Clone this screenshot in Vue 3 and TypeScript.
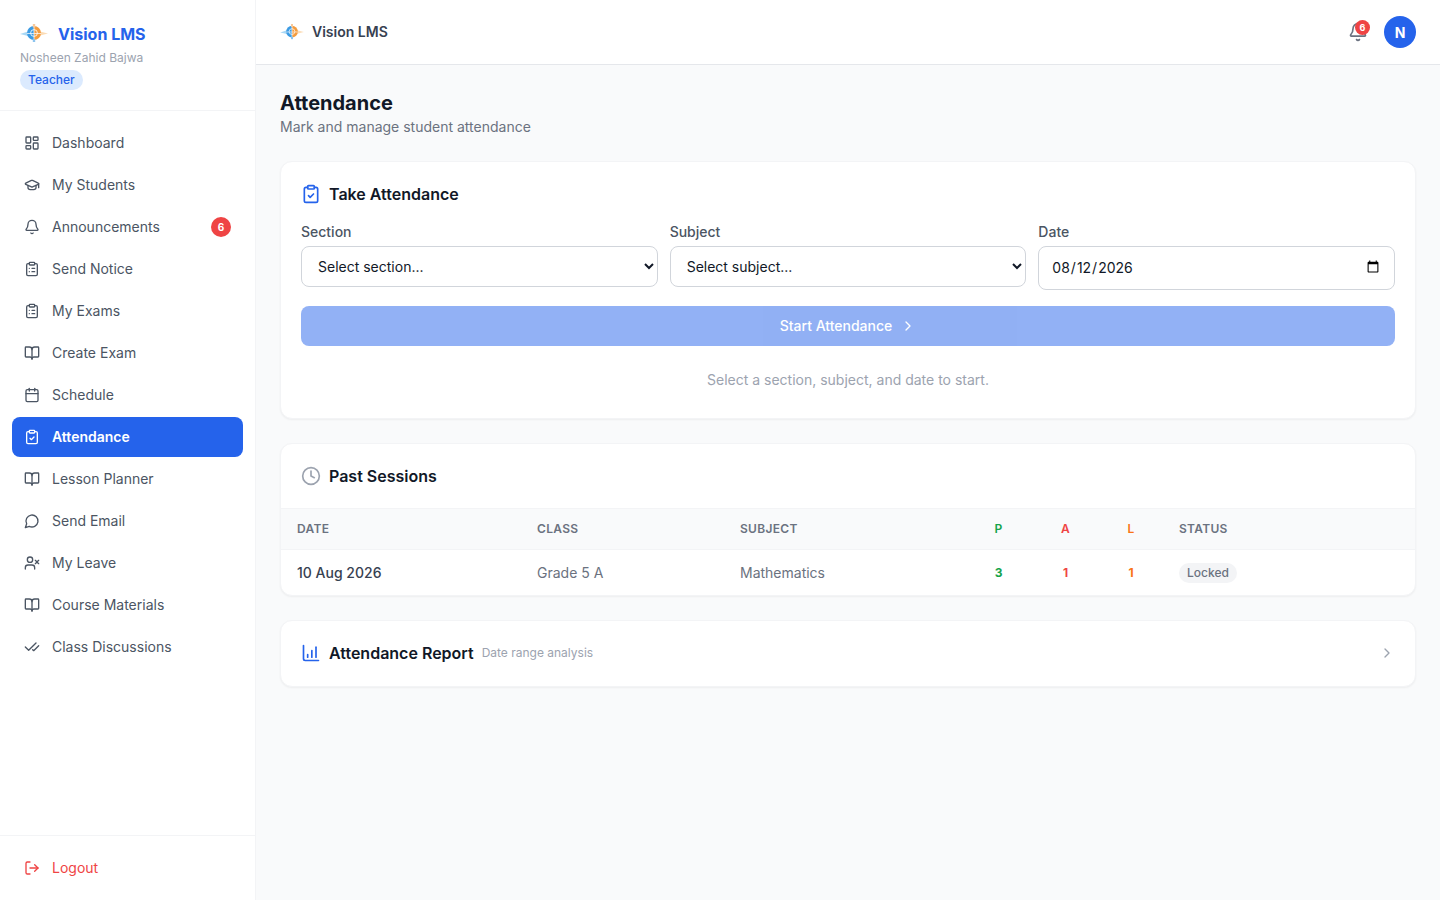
<script setup lang="ts">
const navItems = [
  { label: 'Dashboard', icon: 'grid' },
  { label: 'My Students', icon: 'cap' },
  { label: 'Announcements', icon: 'bell', badge: 6 },
  { label: 'Send Notice', icon: 'list' },
  { label: 'My Exams', icon: 'list' },
  { label: 'Create Exam', icon: 'book' },
  { label: 'Schedule', icon: 'calendar' },
  { label: 'Attendance', icon: 'check', active: true },
  { label: 'Lesson Planner', icon: 'book' },
  { label: 'Send Email', icon: 'chat' },
  { label: 'My Leave', icon: 'userx' },
  { label: 'Course Materials', icon: 'book' },
  { label: 'Class Discussions', icon: 'checks' },
]
</script>

<template>
  <div class="layout">
    <aside class="sidebar">
      <div class="brand">
        <div class="brand-row">
          <svg class="logo" width="28" height="20" viewBox="0 0 28 20">
            <path d="M0 10 L8 7.5 L8 12 Z" fill="#a8d8f6" />
            <path d="M28 9.5 L20 7.5 L20 11.5 Z" fill="#fbdcb6" />
            <path d="M14 2 A7 7 0 0 0 14 16 Z" fill="#3c9be3" />
            <path d="M14 2 A7 7 0 0 1 14 16 Z" fill="#f49c3e" />
            <circle cx="14" cy="9" r="3.4" fill="none" stroke="#fff" stroke-width="1" opacity=".8" />
            <path d="M7 9.5 H21 M14 2 V16" stroke="#fff" stroke-width=".9" opacity=".8" />
            <rect x="12.8" y="0" width="2.4" height="3.5" fill="#f7c99b" />
            <rect x="12.8" y="15" width="2.4" height="3" fill="#8cc4ee" />
          </svg>
          <span class="brand-name">Vision LMS</span>
        </div>
        <div class="user-name">Nosheen Zahid Bajwa</div>
        <span class="role">Teacher</span>
      </div>

      <nav class="nav">
        <a v-for="item in navItems" :key="item.label" class="nav-item" :class="{ active: item.active }">
          <svg class="icon" viewBox="0 0 24 24">
            <template v-if="item.icon === 'grid'">
              <rect x="3" y="3" width="7" height="9" rx="1" /><rect x="14" y="3" width="7" height="5" rx="1" />
              <rect x="14" y="12" width="7" height="9" rx="1" /><rect x="3" y="16" width="7" height="5" rx="1" />
            </template>
            <template v-else-if="item.icon === 'cap'">
              <path d="M21.42 10.92a1 1 0 0 0-.02-1.84L12.83 5.18a2 2 0 0 0-1.66 0L2.6 9.08a1 1 0 0 0 0 1.83l8.57 3.91a2 2 0 0 0 1.66 0z" />
              <path d="M22 10v6" /><path d="M6 12.5V16a6 3 0 0 0 12 0v-3.5" />
            </template>
            <template v-else-if="item.icon === 'bell'">
              <path d="M10.27 21a2 2 0 0 0 3.46 0" />
              <path d="M3.26 15.33A1 1 0 0 0 4 17h16a1 1 0 0 0 .74-1.67C19.41 13.96 18 12.5 18 8A6 6 0 0 0 6 8c0 4.5-1.41 5.96-2.74 7.33" />
            </template>
            <template v-else-if="item.icon === 'list'">
              <rect x="8" y="2" width="8" height="4" rx="1" />
              <path d="M16 4h2a2 2 0 0 1 2 2v14a2 2 0 0 1-2 2H6a2 2 0 0 1-2-2V6a2 2 0 0 1 2-2h2" />
              <path d="M12 11h4" /><path d="M12 16h4" /><path d="M8 11h.01" /><path d="M8 16h.01" />
            </template>
            <template v-else-if="item.icon === 'book'">
              <path d="M12 7v14" />
              <path d="M3 18a1 1 0 0 1-1-1V4a1 1 0 0 1 1-1h5a4 4 0 0 1 4 4 4 4 0 0 1 4-4h5a1 1 0 0 1 1 1v13a1 1 0 0 1-1 1h-6a3 3 0 0 0-3 3 3 3 0 0 0-3-3z" />
            </template>
            <template v-else-if="item.icon === 'calendar'">
              <path d="M8 2v4" /><path d="M16 2v4" /><rect x="3" y="4" width="18" height="18" rx="2" /><path d="M3 10h18" />
            </template>
            <template v-else-if="item.icon === 'check'">
              <rect x="8" y="2" width="8" height="4" rx="1" />
              <path d="M16 4h2a2 2 0 0 1 2 2v14a2 2 0 0 1-2 2H6a2 2 0 0 1-2-2V6a2 2 0 0 1 2-2h2" />
              <path d="m9 14 2 2 4-4" />
            </template>
            <template v-else-if="item.icon === 'chat'">
              <path d="M7.9 20A9 9 0 1 0 4 16.1L2 22Z" />
            </template>
            <template v-else-if="item.icon === 'userx'">
              <path d="M16 21v-2a4 4 0 0 0-4-4H6a4 4 0 0 0-4 4v2" /><circle cx="9" cy="7" r="4" />
              <path d="m17 8 5 5" /><path d="m22 8-5 5" />
            </template>
            <template v-else>
              <path d="M18 6 7 17l-5-5" /><path d="m22 10-7.5 7.5L13 16" />
            </template>
          </svg>
          <span class="nav-label">{{ item.label }}</span>
          <span v-if="item.badge" class="nav-badge">{{ item.badge }}</span>
        </a>
      </nav>

      <div class="side-foot">
        <a class="logout">
          <svg class="icon" viewBox="0 0 24 24">
            <path d="M9 21H5a2 2 0 0 1-2-2V5a2 2 0 0 1 2-2h4" /><path d="m16 17 5-5-5-5" /><path d="M21 12H9" />
          </svg>
          <span>Logout</span>
        </a>
      </div>
    </aside>

    <div class="content">
      <header class="topbar">
        <div class="top-brand">
          <svg class="logo" width="24" height="16" viewBox="0 0 28 19">
            <path d="M0 10 L8 7.5 L8 12 Z" fill="#a8d8f6" />
            <path d="M28 9.5 L20 7.5 L20 11.5 Z" fill="#fbdcb6" />
            <path d="M14 2 A7 7 0 0 0 14 16 Z" fill="#3c9be3" />
            <path d="M14 2 A7 7 0 0 1 14 16 Z" fill="#f49c3e" />
            <circle cx="14" cy="9" r="3.4" fill="none" stroke="#fff" stroke-width="1" opacity=".8" />
            <path d="M7 9.5 H21 M14 2 V16" stroke="#fff" stroke-width=".9" opacity=".8" />
            <rect x="12.8" y="0" width="2.4" height="3.5" fill="#f7c99b" />
            <rect x="12.8" y="15" width="2.4" height="3" fill="#8cc4ee" />
          </svg>
          <span>Vision LMS</span>
        </div>
        <div class="top-actions">
          <div class="bell">
            <svg class="bell-icon" viewBox="0 0 24 24">
              <path d="M10.27 21a2 2 0 0 0 3.46 0" />
              <path d="M3.26 15.33A1 1 0 0 0 4 17h16a1 1 0 0 0 .74-1.67C19.41 13.96 18 12.5 18 8A6 6 0 0 0 6 8c0 4.5-1.41 5.96-2.74 7.33" />
            </svg>
            <span class="bell-badge">6</span>
          </div>
          <div class="avatar">N</div>
        </div>
      </header>

      <main class="main">
        <h1>Attendance</h1>
        <p class="subtitle">Mark and manage student attendance</p>

        <section class="card take">
          <div class="card-title">
            <svg class="title-icon blue" viewBox="0 0 24 24">
              <rect x="8" y="2" width="8" height="4" rx="1" />
              <path d="M16 4h2a2 2 0 0 1 2 2v14a2 2 0 0 1-2 2H6a2 2 0 0 1-2-2V6a2 2 0 0 1 2-2h2" />
              <path d="m9 14 2 2 4-4" />
            </svg>
            <h2>Take Attendance</h2>
          </div>
          <div class="fields">
            <label class="field">
              <span>Section</span>
              <select><option>Select section...</option></select>
            </label>
            <label class="field">
              <span>Subject</span>
              <select><option>Select subject...</option></select>
            </label>
            <label class="field">
              <span>Date</span>
              <input type="date" value="2026-08-12" />
            </label>
          </div>
          <button class="start" disabled>
            Start Attendance
            <svg class="chev" viewBox="0 0 24 24"><path d="m9 18 6-6-6-6" /></svg>
          </button>
          <p class="hint">Select a section, subject, and date to start.</p>
        </section>

        <section class="card sessions">
          <div class="card-title sessions-title">
            <svg class="title-icon gray" viewBox="0 0 24 24">
              <circle cx="12" cy="12" r="10" /><path d="M12 6v6l4 2" />
            </svg>
            <h2>Past Sessions</h2>
          </div>
          <table>
            <colgroup>
              <col style="width: 240px" /><col style="width: 203px" /><col style="width: 241px" />
              <col style="width: 67px" /><col style="width: 67px" /><col style="width: 64px" /><col />
            </colgroup>
            <thead>
              <tr>
                <th>DATE</th><th>CLASS</th><th>SUBJECT</th>
                <th class="mid green">P</th><th class="mid red">A</th><th class="mid orange">L</th>
                <th>STATUS</th>
              </tr>
            </thead>
            <tbody>
              <tr>
                <td class="date">10 Aug 2026</td>
                <td>Grade 5 A</td>
                <td>Mathematics</td>
                <td class="mid green num">3</td>
                <td class="mid red num">1</td>
                <td class="mid orange num">1</td>
                <td><span class="locked">Locked</span></td>
              </tr>
            </tbody>
          </table>
        </section>

        <section class="card report">
          <svg class="title-icon blue" viewBox="0 0 24 24">
            <path d="M3 3v16a2 2 0 0 0 2 2h16" /><path d="M8 17v-3" /><path d="M13 17V9" /><path d="M18 17V5" />
          </svg>
          <h2>Attendance Report</h2>
          <span class="report-note">Date range analysis</span>
          <svg class="report-chev" viewBox="0 0 24 24"><path d="m9 18 6-6-6-6" /></svg>
        </section>
      </main>
    </div>
  </div>
</template>

<style>
html, body { margin: 0; background: #f9fafb; }
</style>

<style scoped>
.layout { display: flex; min-height: 900px; font-family: Inter, "Liberation Sans", sans-serif; color: #111827; }

.sidebar { width: 256px; flex-shrink: 0; box-sizing: border-box; background: #fff; border-right: 1px solid #f3f4f6; display: flex; flex-direction: column; }
.brand { padding: 20px 20px 20px; border-bottom: 1px solid #f3f4f6; height: 111px; box-sizing: border-box; }
.brand-row { display: flex; align-items: center; gap: 10px; height: 28px; }
.brand-name { font-size: 16px; font-weight: 700; color: #2563eb; }
.user-name { font-size: 12px; color: #9ca3af; line-height: 16px; margin-top: 2px; }
.role { display: inline-block; margin-top: 4px; padding: 0 8px; height: 20px; line-height: 20px; border-radius: 999px; background: #dbeafe; color: #2563eb; font-size: 12px; font-weight: 500; }

.nav { padding: 12px; display: flex; flex-direction: column; gap: 2px; flex: 1; }
.nav-item { display: flex; align-items: center; gap: 12px; height: 40px; padding: 0 12px; border-radius: 8px; font-size: 14px; line-height: 20px; color: #4b5563; }
.nav-item.active { background: #2563eb; color: #fff; font-weight: 600; }
.nav-label { flex: 1; }
.nav-badge { width: 20px; height: 20px; border-radius: 50%; background: #ef4444; color: #fff; font-size: 10px; font-weight: 700; display: flex; align-items: center; justify-content: center; }
.icon { width: 16px; height: 16px; flex-shrink: 0; fill: none; stroke: currentColor; stroke-width: 2; stroke-linecap: round; stroke-linejoin: round; }

.side-foot { border-top: 1px solid #f3f4f6; padding: 12px; }
.logout { display: flex; align-items: center; gap: 12px; height: 40px; padding: 0 12px; font-size: 14px; line-height: 20px; color: #ef4444; }

.content { flex: 1; min-width: 0; display: flex; flex-direction: column; }
.topbar { height: 65px; box-sizing: border-box; background: #fff; border-bottom: 1px solid #e5e7eb; display: flex; align-items: center; justify-content: space-between; padding: 0 24px; }
.top-brand { display: flex; align-items: center; gap: 8px; font-size: 14px; line-height: 20px; font-weight: 600; color: #374151; }
.top-actions { display: flex; align-items: center; gap: 16px; }
.bell { position: relative; width: 20px; height: 20px; }
.bell-icon { display: block; width: 20px; height: 20px; fill: none; stroke: #6b7280; stroke-width: 2; stroke-linecap: round; stroke-linejoin: round; }
.bell-badge { position: absolute; top: -2px; right: -2px; width: 15px; height: 15px; border-radius: 50%; background: #ef4444; color: #fff; font-size: 9px; font-weight: 700; display: flex; align-items: center; justify-content: center; }
.avatar { width: 32px; height: 32px; border-radius: 50%; background: #2563eb; color: #fff; font-size: 14px; font-weight: 700; display: flex; align-items: center; justify-content: center; }

.main { padding: 24px 24px; display: flex; flex-direction: column; }
h1 { margin: 0; font-size: 20px; line-height: 28px; font-weight: 700; color: #111827; }
.subtitle { margin: 0; font-size: 14px; line-height: 20px; color: #6b7280; }

.card { background: #fff; border: 1px solid #f3f4f6; border-radius: 12px; box-shadow: 0 1px 2px rgba(0, 0, 0, .05); }
.take { margin-top: 24px; padding: 20px; height: 258px; box-sizing: border-box; }
.card-title { display: flex; align-items: center; gap: 8px; height: 24px; margin-bottom: 16px; }
h2 { margin: 0; font-size: 16px; font-weight: 600; color: #111827; }
.title-icon { width: 20px; height: 20px; flex-shrink: 0; fill: none; stroke-width: 2; stroke-linecap: round; stroke-linejoin: round; }
.title-icon.blue { stroke: #2563eb; }
.title-icon.gray { stroke: #9ca3af; }

.fields { display: grid; grid-template-columns: repeat(3, 1fr); gap: 12px; align-items: start; }
.field { display: flex; flex-direction: column; gap: 4px; }
.field span { font-size: 14px; line-height: 20px; font-weight: 500; color: #4b5563; }
select { height: 41px; box-sizing: border-box; width: 100%; padding: 0 12px; border: 1px solid #d1d5db; border-radius: 8px; background: #fff; font: 14px Inter, sans-serif; color: #111827; }
input { height: 44px; box-sizing: border-box; width: 100%; padding: 0 12px 2px; border: 1px solid #d1d5db; border-radius: 8px; background: #fff; font: 14px Inter, sans-serif; color: #111827; }
.start { margin-top: 16px; width: 100%; height: 40px; border: none; border-radius: 8px; background: #2563eb; opacity: .5; color: #fff; font: 500 14px/20px Inter, sans-serif; display: flex; align-items: center; justify-content: center; gap: 8px; }
.chev { width: 16px; height: 16px; fill: none; stroke: #fff; stroke-width: 2; stroke-linecap: round; stroke-linejoin: round; }
.hint { margin: 24px 0 0; text-align: center; font-size: 14px; line-height: 20px; color: #9ca3af; }

.sessions { margin-top: 24px; overflow: hidden; }
.sessions-title { height: 64px; margin: 0; padding: 0 20px; box-sizing: border-box; }
table { width: 100%; border-collapse: collapse; table-layout: fixed; }
th { height: 41px; padding: 0 16px 2px; text-align: left; background: #f9fafb; border-top: 1px solid #f3f4f6; border-bottom: 1px solid #f3f4f6; font-size: 12px; font-weight: 600; letter-spacing: .3px; color: #6b7280; box-sizing: border-box; }
td { height: 45px; padding: 1px 16px 0; font-size: 14px; color: #6b7280; box-sizing: border-box; }
td.date { color: #374151; font-weight: 500; }
.mid { text-align: center; padding-left: 0; padding-right: 0; }
td.num { font-size: 12px; font-weight: 700; }
th.green, td.green { color: #16a34a; }
th.red, td.red { color: #ef4444; }
th.orange, td.orange { color: #f97316; }
.locked { display: inline-block; padding: 0 8px; height: 20px; line-height: 20px; border-radius: 999px; background: #f3f4f6; color: #6b7280; font-size: 12px; font-weight: 500; }

.report { margin-top: 24px; height: 67px; box-sizing: border-box; padding: 0 20px 1px; display: flex; align-items: center; }
.report h2 { margin-left: 8px; }
.report-note { margin-left: 8px; font-size: 12px; color: #9ca3af; }
.report-chev { margin-left: auto; width: 16px; height: 16px; fill: none; stroke: #9ca3af; stroke-width: 2; stroke-linecap: round; stroke-linejoin: round; }
</style>
